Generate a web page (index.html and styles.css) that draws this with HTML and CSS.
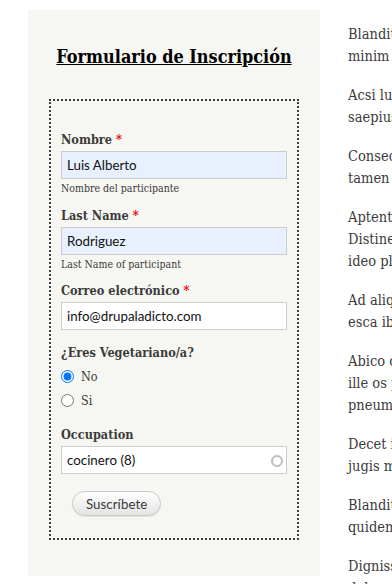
FILE: index.html
```html
<!DOCTYPE html>
<html lang="es">
<head>
<meta charset="utf-8">
<title>Formulario de Inscripción</title>
<link rel="stylesheet" href="styles.css">
</head>
<body>
<div class="page">
  <aside class="sidebar">
    <h2 class="block-title">Formulario de Inscripción</h2>
    <form class="fieldset">
      <div class="form-item with-desc">
        <label class="label">Nombre <span class="req">*</span></label>
        <input class="text autofill" type="text" value="Luis Alberto">
        <div class="description">Nombre del participante</div>
      </div>
      <div class="form-item with-desc">
        <label class="label">Last Name <span class="req">*</span></label>
        <input class="text autofill" type="text" value="Rodriguez">
        <div class="description">Last Name of participant</div>
      </div>
      <div class="form-item">
        <label class="label">Correo electrónico <span class="req">*</span></label>
        <input class="text" type="text" value="info@drupaladicto.com">
      </div>
      <div class="form-item">
        <div class="label">¿Eres Vegetariano/a?</div>
        <label class="radio-row"><input type="radio" name="veg" checked><span>No</span></label>
        <label class="radio-row"><input type="radio" name="veg"><span>Si</span></label>
      </div>
      <div class="form-item last">
        <label class="label">Occupation</label>
        <div class="autocomplete">
          <input class="text" type="text" value="cocinero (8)">
          <span class="throbber"></span>
        </div>
      </div>
      <button class="button" type="button">Suscríbete</button>
    </form>
  </aside>
  <main class="content">
    <p>Utrum ergo</p>
    <p>Blandit eros<br>minim premo</p>
    <p>Acsi luctus<br>saepius quia</p>
    <p>Consectetuer<br>tamen ullamcorper</p>
    <p>Aptent augue<br>Distineo nunc<br>ideo plaga</p>
    <p>Ad aliquam<br>esca ibidem</p>
    <p>Abico causa<br>ille os pala<br>pneum vel</p>
    <p>Decet in<br>jugis magna</p>
    <p>Blandit ut<br>quidem nisl</p>
    <p>Dignissim at<br>dolus</p>
  </main>
</div>
</body>
</html>
```
FILE: styles.css
```css
html, body {
  margin: 0;
  padding: 0;
  overflow: hidden;
  background: #ffffff;
}

body {
  font-family: "DejaVu Serif Condensed", "DejaVu Serif", serif;
  color: #3b3b3b;
}

.page {
  display: flex;
  align-items: flex-start;
}

.sidebar {
  flex: 0 0 292px;
  box-sizing: border-box;
  height: 566px;
  margin: 10px 0 0 28px;
  padding: 35px 21px 0;
  background: #f6f6f2;
}

.block-title {
  margin: 0 0 30px;
  font-size: 17.9px;
  line-height: 24px;
  font-weight: bold;
  color: #000;
  text-align: center;
  text-decoration: underline;
}

.fieldset {
  margin: 0;
  border: 2px dotted #3a3a3a;
  padding: 29px 10px 22px;
  display: flex;
  flex-direction: column;
  align-items: stretch;
}

.form-item {
  display: flex;
  flex-direction: column;
  margin-bottom: 13px;
}

.form-item.with-desc {
  margin-bottom: 8.5px;
}

.form-item.last {
  margin-bottom: 17px;
}

.label {
  display: block;
  font-size: 12.6px;
  font-weight: bold;
  line-height: 20px;
  margin-bottom: 1px;
  color: #3b3b3b;
}

.req {
  color: #e00;
  font-weight: bold;
}

.text {
  box-sizing: border-box;
  width: 100%;
  height: 28px;
  margin: 0;
  padding: 0 5px;
  border: 1px solid #cccccc;
  background: #ffffff;
  font-family: Lato, "Noto Sans", sans-serif;
  font-size: 13.33px;
  color: #111;
  outline: none;
}

.text.autofill {
  background: #e8f0fe;
}

.description {
  font-size: 10.5px;
  line-height: 18px;
  color: #3b3b3b;
}

.radio-row {
  display: flex;
  align-items: center;
  height: 24px;
  font-size: 12.5px;
  color: #3b3b3b;
}

.radio-row input {
  width: 13px;
  height: 13px;
  margin: 0 7px 0 0;
}

.autocomplete {
  position: relative;
  display: flex;
}

.throbber {
  position: absolute;
  right: 4px;
  top: 9px;
  width: 8px;
  height: 8px;
  border: 2px solid #bdbdbd;
  border-radius: 50%;
}

.button {
  align-self: flex-start;
  box-sizing: border-box;
  height: 25px;
  margin: 0 0 0 11px;
  padding: 0 13px;
  border: 1px solid #c8c8c8;
  border-radius: 13px;
  background: linear-gradient(#fefefe, #e4e4e4);
  box-shadow: 0 1px 1px rgba(0, 0, 0, 0.08);
  font-family: Lato, "Noto Sans", sans-serif;
  font-size: 13.33px;
  color: #3a3a3a;
}

.content {
  flex: 1 1 auto;
  min-width: 0;
  margin: -15px 0 0 28px;
  white-space: nowrap;
}

.content p {
  margin: 0 0 17.5px;
  font-size: 14.5px;
  line-height: 21.75px;
  color: #3b3b3b;
}
```
